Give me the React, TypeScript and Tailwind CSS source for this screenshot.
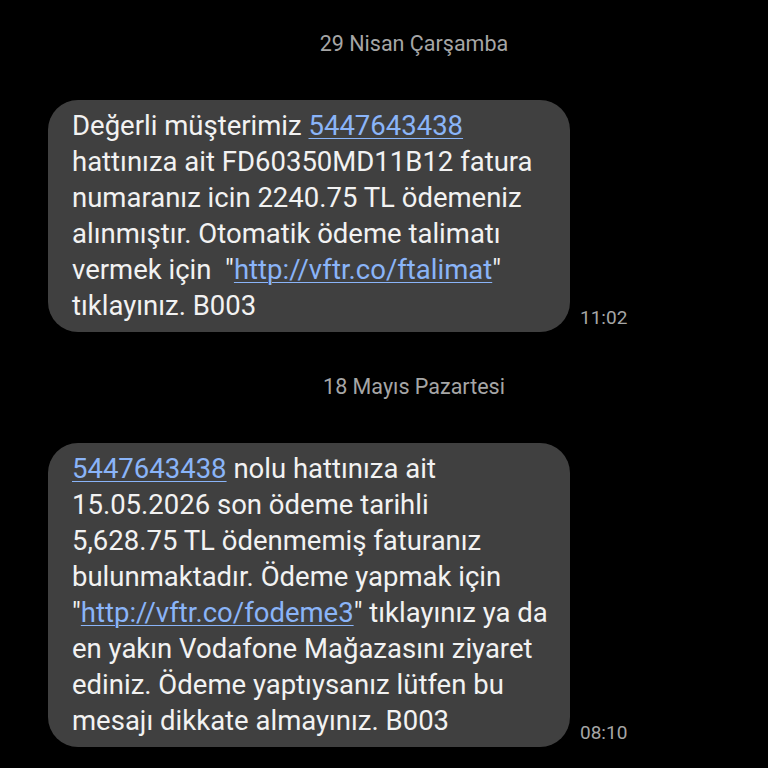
import React from 'react'

const link = 'text-[#8ab4f8] underline decoration-1 underline-offset-[3px]'

function DateLabel({ text }: { text: string }) {
  return (
    <div className="flex justify-center pl-[60px] text-[21.5px] leading-[26px] text-[#a6a6a6]">
      {text}
    </div>
  )
}

function Bubble({ time, children }: { time: string; children: React.ReactNode }) {
  return (
    <div className="flex items-end pl-[48px]">
      <div className="w-[522px] shrink-0 whitespace-nowrap rounded-[30px] bg-[#404040] px-[24px] py-[8px] text-[27.5px] leading-[36px] text-[#f2f2f2]">
        {children}
      </div>
      <div className="ml-[10px] mb-[2px] text-[19px] leading-[24px] text-[#a6a6a6]">{time}</div>
    </div>
  )
}

export default function App() {
  return (
    <div className="h-[768px] w-[768px] overflow-hidden bg-black" style={{ fontFamily: 'Roboto, "Noto Sans", sans-serif' }}>
      <div className="pt-[31px]">
        <DateLabel text="29 Nisan Çarşamba" />
      </div>
      <div className="mt-[43px]">
        <Bubble time="11:02">
          Değerli müşterimiz <span className={link}>5447643438</span>
          <br />
          hattınıza ait FD60350MD11B12 fatura
          <br />
          numaranız icin 2240.75 TL ödemeniz
          <br />
          alınmıştır. Otomatik ödeme talimatı
          <br />
          vermek için&nbsp; "<span className={link}>http://vftr.co/ftalimat</span>"
          <br />
          tıklayınız. B003
        </Bubble>
      </div>
      <div className="mt-[42px]">
        <DateLabel text="18 Mayıs Pazartesi" />
      </div>
      <div className="mt-[43px]">
        <Bubble time="08:10">
          <span className={link}>5447643438</span> nolu hattınıza ait
          <br />
          15.05.2026 son ödeme tarihli
          <br />
          5,628.75 TL ödenmemiş faturanız
          <br />
          bulunmaktadır. Ödeme yapmak için
          <br />
          "<span className={link}>http://vftr.co/fodeme3</span>" tıklayınız ya da
          <br />
          en yakın Vodafone Mağazasını ziyaret
          <br />
          ediniz. Ödeme yaptıysanız lütfen bu
          <br />
          mesajı dikkate almayınız. B003
        </Bubble>
      </div>
    </div>
  )
}
